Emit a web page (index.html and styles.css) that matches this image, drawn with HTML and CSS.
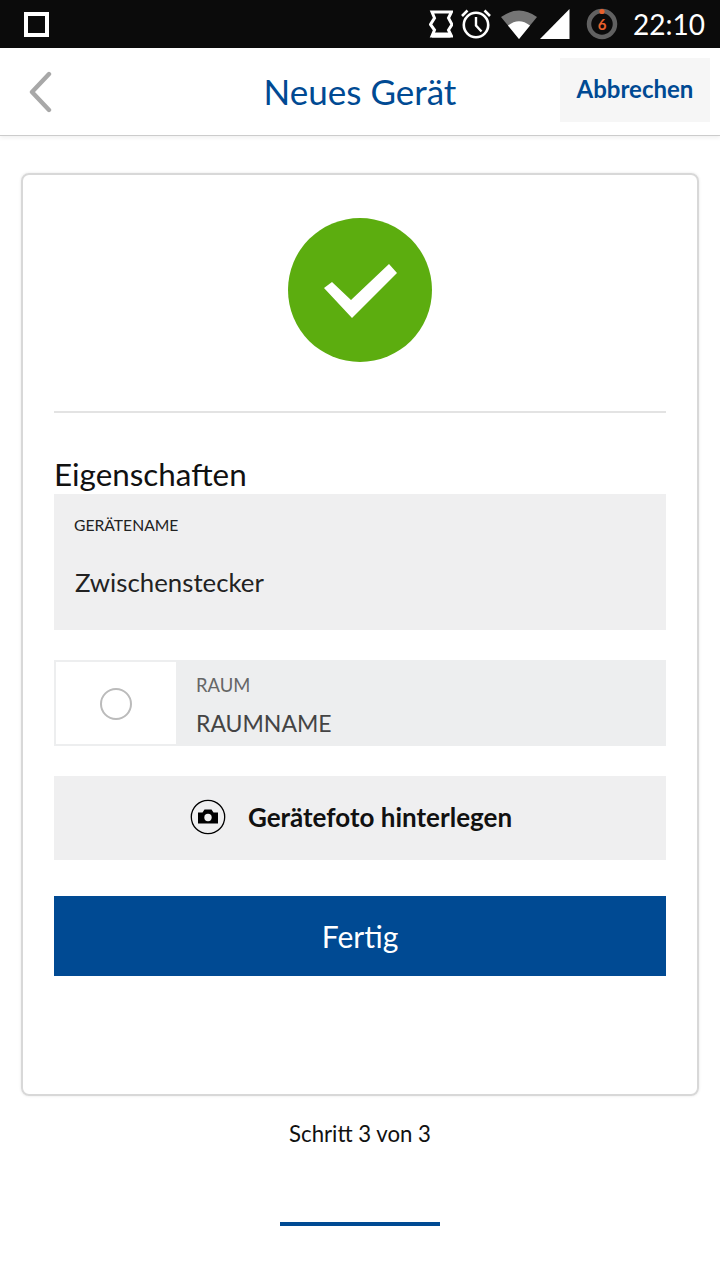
FILE: index.html
```html
<!DOCTYPE html>
<html lang="de">
<head>
<meta charset="utf-8">
<title>Neues Gerät</title>
<link rel="stylesheet" href="styles.css">
</head>
<body>
<div class="status">
  <span class="status-square"></span>
  <div class="status-right">
    <svg class="ic-net" width="24" height="28" viewBox="0 0 24 28"><path d="M3 2H22.5L19.5 8L23 14.5L19.5 20L22.5 26H3L5.5 20L1.5 14.5L5.5 8Z" fill="none" stroke="#fff" stroke-width="3"/><path d="M3 22.5H21.5V27.5H3Z" fill="#fff"/></svg>
    <svg class="ic-alarm" width="30" height="30" viewBox="0 0 30 30"><circle cx="15" cy="16" r="12.2" fill="none" stroke="#fff" stroke-width="2.6"/><path d="M15 8V16.5L20.5 22.5" fill="none" stroke="#fff" stroke-width="2.4"/><path d="M1 7L6.5 1.5M29 7L23.5 1.5" stroke="#fff" stroke-width="2.6"/></svg>
    <svg class="ic-wifi" width="38" height="30" viewBox="0 0 38 30"><path d="M19 30L1 8Q19 -5 37 8Z" fill="#757575"/><path d="M19 30L8 16.5Q19 8 30 16.5Z" fill="#fff"/></svg>
    <svg class="ic-signal" width="30" height="30" viewBox="0 0 30 30"><path d="M29.5 0V30H0Z" fill="#fff"/></svg>
    <svg class="ic-timer" width="32" height="32" viewBox="0 0 32 32"><circle cx="16" cy="16" r="13" fill="none" stroke="#616161" stroke-width="4.5"/><circle cx="16" cy="3.5" r="2.6" fill="#e8602c"/><text x="16" y="21.5" text-anchor="middle" class="timer-num">6</text></svg>
    <span class="clock">22:10</span>
  </div>
</div>
<header class="topbar">
  <svg class="back" width="26" height="42" viewBox="0 0 26 42"><path d="M22 3L5 21L22 39" fill="none" stroke="#a8a8a8" stroke-width="4.4" stroke-linecap="round" stroke-linejoin="round"/></svg>
  <h1 class="title">Neues Gerät</h1>
  <button class="cancel">Abbrechen</button>
</header>
<main class="page">
  <section class="card">
    <div class="success">
      <svg width="144" height="144" viewBox="0 0 144 144"><circle cx="72" cy="72" r="72" fill="#5cad0f"/><path d="M44 64L63 82L101 46L109 55L64 100L36 70Z" fill="#fff"/></svg>
    </div>
    <hr class="divider">
    <h2 class="section-title">Eigenschaften</h2>
    <div class="name-field">
      <span class="name-label">GERÄTENAME</span>
      <span class="name-value">Zwischenstecker</span>
    </div>
    <div class="room">
      <div class="room-icon"><span class="room-ring"></span></div>
      <div class="room-text">
        <span class="room-label">RAUM</span>
        <span class="room-value">RAUMNAME</span>
      </div>
    </div>
    <button class="photo">
      <svg width="36" height="36" viewBox="0 0 36 36"><circle cx="18" cy="18" r="16.7" fill="none" stroke="#000" stroke-width="1.3"/><path d="M8 13.5H12.5L14.5 10.5H21.5L23.5 13.5H28V24.5H8Z" fill="#000"/><circle cx="18" cy="18.5" r="3.7" fill="#efeff0"/></svg>
      <span>Gerätefoto hinterlegen</span>
    </button>
    <button class="done">Fertig</button>
  </section>
  <p class="step">Schritt 3 von 3</p>
  <div class="progress"></div>
</main>
</body>
</html>
```
FILE: styles.css
```css
* { box-sizing: border-box; }
html, body { margin: 0; padding: 0; }
body {
  width: 720px;
  height: 1280px;
  background: #fff;
  font-family: "Lato", "Open Sans", sans-serif;
  color: #000;
  overflow: hidden;
}
.status {
  height: 48px;
  background: #0b0b0b;
  display: flex;
  align-items: center;
  justify-content: space-between;
  padding: 0 15px 0 24px;
}
.status-square {
  width: 25px;
  height: 25px;
  border: 4px solid #fff;
}
.status-right { display: flex; align-items: center; }
.ic-net { margin-right: 8px; }
.ic-alarm { margin-right: 9px; }
.ic-wifi { margin-right: 2px; }
.ic-signal { margin-right: 16px; }
.ic-timer { margin-right: 15px; }
.timer-num { font: 700 15px "Lato", sans-serif; fill: #e8602c; }
.clock { color: #fff; font-size: 28px; line-height: 48px; }
.topbar {
  height: 88px;
  position: relative;
  background: #fff;
  border-bottom: 1px solid #ccc;
  box-shadow: 0 2px 4px rgba(0, 0, 0, 0.06);
  display: flex;
  align-items: center;
  justify-content: space-between;
  padding: 0 10px 0 27px;
}
.back { flex: none; }
.title {
  position: absolute;
  left: 0;
  right: 0;
  top: 21px;
  margin: 0;
  text-align: center;
  font-size: 35px;
  line-height: 44px;
  font-weight: 400;
  color: #004a93;
  pointer-events: none;
}
.cancel {
  width: 150px;
  height: 64px;
  margin-top: -3px;
  border: 0;
  padding: 0 0 3px;
  background: #f6f6f6;
  color: #004a93;
  font: 700 24px "Lato", sans-serif;
}
.page { padding: 37px 21px 0; }
.card {
  height: 923px;
  border: 2px solid #d8d8d8;
  border-radius: 8px;
  padding: 43px 31px 0;
  box-shadow: 0 0 3px rgba(0, 0, 0, 0.1);
}
.success { display: flex; justify-content: center; height: 144px; }
.success svg { display: block; }
.divider {
  margin: 49px 0 0;
  border: 0;
  height: 2px;
  background: #e3e3e3;
}
.section-title {
  margin: 0;
  height: 81px;
  padding-top: 42px;
  font-size: 31.4px;
  line-height: 38px;
  font-weight: 400;
  color: #111;
}
.name-field {
  height: 136px;
  background: #efeff0;
  padding: 21px 20px 0 20px;
  display: flex;
  flex-direction: column;
}
.name-label { font-size: 15.7px; line-height: 20px; color: #222; }
.name-value { margin: 29px 0 0 1px; font-size: 25.8px; line-height: 36px; color: #222; }
.room {
  margin-top: 30px;
  height: 86px;
  display: flex;
  border: 2px solid #edeeef;
  background: #edeeef;
}
.room-icon {
  width: 120px;
  background: #fff;
  display: flex;
  align-items: center;
  justify-content: center;
  padding-top: 2px;
}
.room-ring {
  width: 32px;
  height: 32px;
  border: 2px solid #bbb;
  border-radius: 50%;
}
.room-text {
  flex: 1;
  padding: 12px 20px 0;
  display: flex;
  flex-direction: column;
}
.room-label { font-size: 18.4px; line-height: 22px; color: #666; }
.room-value { margin-top: 11px; font-size: 23px; line-height: 32px; color: #444; }
.photo {
  display: flex;
  align-items: center;
  justify-content: center;
  gap: 22px;
  width: 100%;
  height: 84px;
  margin-top: 30px;
  border: 0;
  padding: 0 18px 3px 0;
  background: #efeff0;
  color: #111;
  font: 700 26px "Lato", sans-serif;
}
.done {
  display: block;
  width: 100%;
  height: 80px;
  margin-top: 36px;
  border: 0;
  background: #004a93;
  color: #fff;
  font: 400 30px "Lato", sans-serif;
}
.step {
  margin: 23px 0 0;
  text-align: center;
  font-size: 22.2px;
  line-height: 30px;
  color: #111;
}
.progress {
  width: 160px;
  height: 4px;
  margin: 73px auto 0;
  background: #004a93;
}
```
